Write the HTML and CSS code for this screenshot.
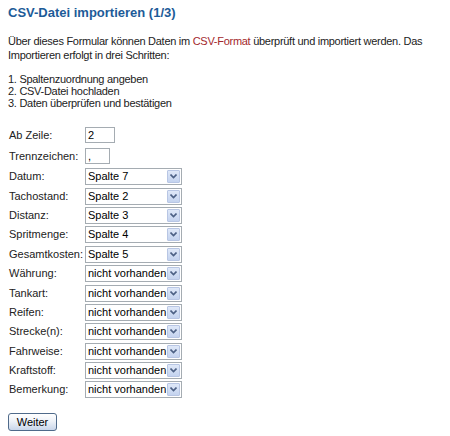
FILE: index.html
```html
<!DOCTYPE html>
<html lang="de">
<head>
<meta charset="utf-8">
<title>CSV-Datei importieren</title>
<link rel="stylesheet" href="styles.css">
</head>
<body>
<h1 class="title">CSV-Datei importieren (1/3)</h1>
<p class="intro">Über dieses Formular können Daten im <a class="link" href="#">CSV-Format</a> überprüft und importiert werden. Das Importieren erfolgt in drei Schritten:</p>
<ol class="steps">
  <li>Spaltenzuordnung angeben</li>
  <li>CSV-Datei hochladen</li>
  <li>Daten überprüfen und bestätigen</li>
</ol>
<form class="form">
  <label class="label">Ab Zeile:</label>
  <div class="cell"><input class="text text-row" type="text" value="2"></div>
  <label class="label">Trennzeichen:</label>
  <div class="cell"><input class="text text-sep" type="text" value=","></div>

  <label class="label">Datum:</label>
  <div class="cell"><div class="select"><select class="select-field"><option>Spalte 7</option></select><span class="select-btn"><svg viewBox="0 0 7 5" width="7" height="5"><path d="M0.5 0.5 L3.5 3.5 L6.5 0.5" fill="none" stroke="#4d6185" stroke-width="1.6"/></svg></span></div></div>
  <label class="label">Tachostand:</label>
  <div class="cell"><div class="select"><select class="select-field"><option>Spalte 2</option></select><span class="select-btn"><svg viewBox="0 0 7 5" width="7" height="5"><path d="M0.5 0.5 L3.5 3.5 L6.5 0.5" fill="none" stroke="#4d6185" stroke-width="1.6"/></svg></span></div></div>
  <label class="label">Distanz:</label>
  <div class="cell"><div class="select"><select class="select-field"><option>Spalte 3</option></select><span class="select-btn"><svg viewBox="0 0 7 5" width="7" height="5"><path d="M0.5 0.5 L3.5 3.5 L6.5 0.5" fill="none" stroke="#4d6185" stroke-width="1.6"/></svg></span></div></div>
  <label class="label">Spritmenge:</label>
  <div class="cell"><div class="select"><select class="select-field"><option>Spalte 4</option></select><span class="select-btn"><svg viewBox="0 0 7 5" width="7" height="5"><path d="M0.5 0.5 L3.5 3.5 L6.5 0.5" fill="none" stroke="#4d6185" stroke-width="1.6"/></svg></span></div></div>
  <label class="label">Gesamtkosten:</label>
  <div class="cell"><div class="select"><select class="select-field"><option>Spalte 5</option></select><span class="select-btn"><svg viewBox="0 0 7 5" width="7" height="5"><path d="M0.5 0.5 L3.5 3.5 L6.5 0.5" fill="none" stroke="#4d6185" stroke-width="1.6"/></svg></span></div></div>
  <label class="label">Währung:</label>
  <div class="cell"><div class="select"><select class="select-field"><option>nicht vorhanden</option></select><span class="select-btn"><svg viewBox="0 0 7 5" width="7" height="5"><path d="M0.5 0.5 L3.5 3.5 L6.5 0.5" fill="none" stroke="#4d6185" stroke-width="1.6"/></svg></span></div></div>
  <label class="label">Tankart:</label>
  <div class="cell"><div class="select"><select class="select-field"><option>nicht vorhanden</option></select><span class="select-btn"><svg viewBox="0 0 7 5" width="7" height="5"><path d="M0.5 0.5 L3.5 3.5 L6.5 0.5" fill="none" stroke="#4d6185" stroke-width="1.6"/></svg></span></div></div>
  <label class="label">Reifen:</label>
  <div class="cell"><div class="select"><select class="select-field"><option>nicht vorhanden</option></select><span class="select-btn"><svg viewBox="0 0 7 5" width="7" height="5"><path d="M0.5 0.5 L3.5 3.5 L6.5 0.5" fill="none" stroke="#4d6185" stroke-width="1.6"/></svg></span></div></div>
  <label class="label">Strecke(n):</label>
  <div class="cell"><div class="select"><select class="select-field"><option>nicht vorhanden</option></select><span class="select-btn"><svg viewBox="0 0 7 5" width="7" height="5"><path d="M0.5 0.5 L3.5 3.5 L6.5 0.5" fill="none" stroke="#4d6185" stroke-width="1.6"/></svg></span></div></div>
  <label class="label">Fahrweise:</label>
  <div class="cell"><div class="select"><select class="select-field"><option>nicht vorhanden</option></select><span class="select-btn"><svg viewBox="0 0 7 5" width="7" height="5"><path d="M0.5 0.5 L3.5 3.5 L6.5 0.5" fill="none" stroke="#4d6185" stroke-width="1.6"/></svg></span></div></div>
  <label class="label">Kraftstoff:</label>
  <div class="cell"><div class="select"><select class="select-field"><option>nicht vorhanden</option></select><span class="select-btn"><svg viewBox="0 0 7 5" width="7" height="5"><path d="M0.5 0.5 L3.5 3.5 L6.5 0.5" fill="none" stroke="#4d6185" stroke-width="1.6"/></svg></span></div></div>
  <label class="label">Bemerkung:</label>
  <div class="cell"><div class="select"><select class="select-field"><option>nicht vorhanden</option></select><span class="select-btn"><svg viewBox="0 0 7 5" width="7" height="5"><path d="M0.5 0.5 L3.5 3.5 L6.5 0.5" fill="none" stroke="#4d6185" stroke-width="1.6"/></svg></span></div></div>
</form>
<div class="actions"><button class="button" type="button">Weiter</button></div>
</body>
</html>
```
FILE: styles.css
```css
html, body {
  margin: 0;
  padding: 0;
  background: #ffffff;
}
body {
  padding: 5px 8px 0 8px;
  font-family: "Liberation Sans", Arial, sans-serif;
  font-size: 11px;
  color: #222222;
}
.title {
  margin: 0;
  font-size: 13px;
  line-height: 16px;
  font-weight: bold;
  color: #1d5b98;
}
.intro {
  margin: 13px 0 0 0;
  line-height: 14px;
  letter-spacing: -0.28px;
}
.link {
  color: #a3282c;
  text-decoration: none;
}
.steps {
  margin: 11px 0 0 0;
  padding: 0;
  line-height: 12px;
  letter-spacing: -0.28px;
  list-style: decimal inside;
}
.form {
  margin: 16px 0 0 1px;
  display: grid;
  grid-template-columns: 76px auto;
  grid-template-rows: 20px 22px repeat(12, 19.4px);
  align-items: center;
  justify-content: start;
}
.label {
  line-height: 13px;
  white-space: nowrap;
}
.cell {
  display: flex;
  align-items: center;
}
.text {
  box-sizing: border-box;
  height: 16px;
  margin: 0;
  padding: 0 2px;
  border: 1px solid #a5acb2;
  font-family: "Liberation Sans", Arial, sans-serif;
  font-size: 11px;
  color: #000;
  outline: none;
}
.text-row { width: 30px; }
.text-sep { width: 25px; }
.select {
  box-sizing: border-box;
  width: 97px;
  height: 17px;
  border: 1px solid #a5acb2;
  display: flex;
  align-items: stretch;
  background: #fff;
}
.select-field {
  flex: 1;
  min-width: 0;
  -webkit-appearance: none;
  appearance: none;
  border: 0;
  margin: 0;
  padding: 0 0 0 2px;
  background: transparent;
  font-family: "Liberation Sans", Arial, sans-serif;
  font-size: 11px;
  color: #000;
  outline: none;
  height: 15px;
  line-height: 15px;
}
.select-btn {
  box-sizing: border-box;
  width: 13px;
  margin: 1px 1px 1px 0;
  border: 1px solid #b8c6e4;
  border-radius: 1px;
  background: linear-gradient(#dfe8f8, #c4d3ef);
  display: flex;
  align-items: center;
  justify-content: center;
}
.select-btn svg { display: block; }
.actions {
  margin-top: 13px;
}
.button {
  box-sizing: border-box;
  width: 49px;
  height: 18px;
  margin: 0;
  padding: 0;
  border: 1px solid #4f6a8a;
  border-radius: 3px;
  background: linear-gradient(#ffffff, #eef2f8 45%, #c9d6ea);
  font-family: "Liberation Sans", Arial, sans-serif;
  font-size: 11px;
  color: #000;
  line-height: 14px;
}
```
